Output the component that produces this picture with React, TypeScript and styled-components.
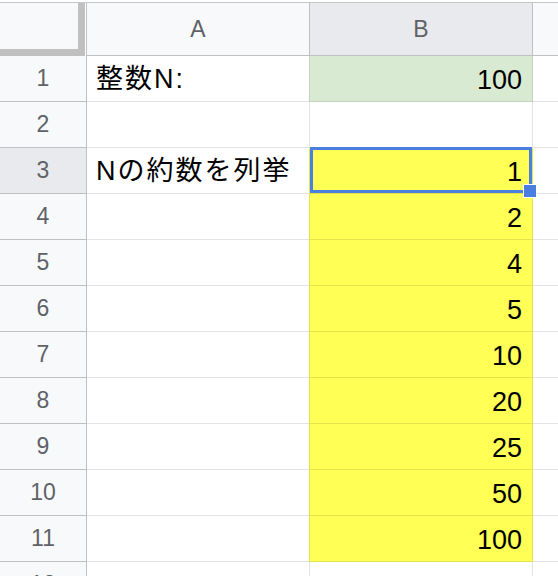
import React from "react";
import styled, { createGlobalStyle, css } from "styled-components";

const GlobalStyle = createGlobalStyle`
  html, body {
    margin: 0;
    padding: 0;
    height: 576px;
    overflow: hidden;
    background: #ffffff;
  }
`;

type Fill = "none" | "green" | "yellow";

const fills: Record<Fill, { bg: string; line: string }> = {
  none: { bg: "#ffffff", line: "#e2e3e3" },
  green: { bg: "#d9ead3", line: "#c5d1c1" },
  yellow: { bg: "#ffff55", line: "#e3e34c" },
};

const Sheet = styled.div`
  margin-top: 2px;
  border-top: 1px solid #c4c7c5;
  display: grid;
  grid-template-columns: 87px 222px 224px 1fr;
  grid-template-rows: 53px;
  grid-auto-rows: 46px;
  font-family: "Liberation Sans", Arial, "Noto Sans CJK JP", sans-serif;
`;

const Corner = styled.div`
  background: #f8f9fa;
  border-right: 1px solid #c0c0c0;
  box-shadow: inset -1px 0 0 #ffffff, inset -8px -7px 0 #c0c0c0;
`;

const headerText = css`
  display: flex;
  align-items: center;
  justify-content: center;
  color: #5f6368;
  font-size: 23px;
`;

const ColHeader = styled.div<{ $active?: boolean; $boxed?: boolean }>`
  ${headerText};
  background: ${(p) => (p.$active ? "#e8eaed" : "#f8f9fa")};
  border-bottom: 1px solid #c0c0c0;
  ${(p) =>
    p.$boxed &&
    css`
      border-left: 1px solid #c0c0c0;
      border-right: 1px solid #c0c0c0;
    `}
`;

const RowHeader = styled.div<{ $active?: boolean }>`
  ${headerText};
  background: ${(p) => (p.$active ? "#e8eaed" : "#f8f9fa")};
  border-right: 1px solid #c0c0c0;
  border-bottom: 1px solid #c0c0c0;
`;

const Cell = styled.div<{ $fill: Fill; $boxed?: boolean; $right?: boolean }>`
  position: relative;
  display: flex;
  align-items: flex-end;
  justify-content: ${(p) => (p.$right ? "flex-end" : "flex-start")};
  padding: 0 10px 5px 9px;
  font-size: 27px;
  letter-spacing: ${(p) => (p.$right ? "0" : "2px")};
  color: #000000;
  white-space: nowrap;
  background: ${(p) => fills[p.$fill].bg};
  border-bottom: 1px solid ${(p) => fills[p.$fill].line};
  ${(p) =>
    p.$boxed &&
    css`
      border-left: 1px solid ${fills[p.$fill].line};
      border-right: 1px solid ${fills[p.$fill].line};
    `}
`;

const Selection = styled.div`
  position: absolute;
  z-index: 2;
  top: -1px;
  left: 0;
  right: 0;
  bottom: 0;
  border: 3px solid #4a7fe0;
  pointer-events: none;
`;

const Handle = styled.div`
  position: absolute;
  right: -8px;
  bottom: -8px;
  width: 12px;
  height: 12px;
  background: #4a7fe0;
  border: 1px solid #ffffff;
`;

type Row = { a?: string; b?: string; fill?: Fill; selected?: boolean };

const rows: Row[] = [
  { a: "整数N:", b: "100", fill: "green" },
  {},
  { a: "Nの約数を列挙", b: "1", fill: "yellow", selected: true },
  { b: "2", fill: "yellow" },
  { b: "4", fill: "yellow" },
  { b: "5", fill: "yellow" },
  { b: "10", fill: "yellow" },
  { b: "20", fill: "yellow" },
  { b: "25", fill: "yellow" },
  { b: "50", fill: "yellow" },
  { b: "100", fill: "yellow" },
  {},
];

export default function App() {
  return (
    <>
      <GlobalStyle />
      <Sheet>
        <Corner />
        <ColHeader>A</ColHeader>
        <ColHeader $active $boxed>
          B
        </ColHeader>
        <ColHeader />
        {rows.map((r, i) => (
          <React.Fragment key={i}>
            <RowHeader $active={r.selected}>{i + 1}</RowHeader>
            <Cell $fill="none">{r.a}</Cell>
            <Cell $fill={r.fill ?? "none"} $boxed $right>
              {r.b}
              {r.selected && (
                <Selection>
                  <Handle />
                </Selection>
              )}
            </Cell>
            <Cell $fill="none" />
          </React.Fragment>
        ))}
      </Sheet>
    </>
  );
}
